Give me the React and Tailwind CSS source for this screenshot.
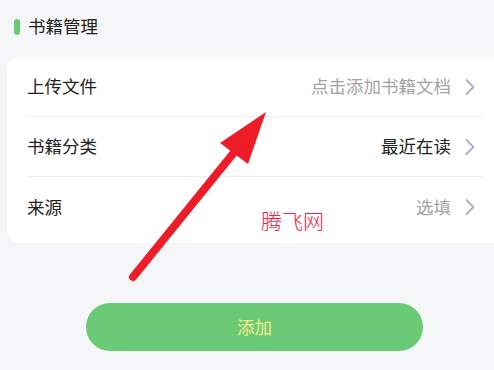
const font = { fontFamily: '"Noto Sans CJK SC", "Noto Sans", sans-serif' };

function Chevron() {
  return (
    <svg width="11" height="16" viewBox="0 0 11 16" className="mr-[6px]">
      <polyline points="1.5,1 8.5,8 1.5,15" fill="none" stroke="#aab0c8" strokeWidth="1.8" strokeLinecap="round" strokeLinejoin="round" />
    </svg>
  );
}

function Row({ label, value, muted, last }) {
  return (
    <div className={`flex h-[60px] items-center justify-between ${last ? '' : 'border-b border-[#eeeeee]'}`}>
      <span className="text-[17.5px] text-[#222222]">{label}</span>
      <span className="flex items-center gap-[14px]">
        <span className={`text-[17.5px] ${muted ? 'text-[#a3a3a3]' : 'text-[#222222]'}`}>{value}</span>
        <Chevron />
      </span>
    </div>
  );
}

export default function App() {
  return (
    <div className="relative h-[370px] w-[494px] overflow-hidden bg-[#f5f6f8]" style={font}>
      <div className="flex h-[57px] items-center gap-[8px] pb-[4px] pl-[14px]">
        <span className="h-[16px] w-[6px] rounded-full bg-[#6aca76]" />
        <span className="text-[17.5px] text-[#222222]">书籍管理</span>
      </div>

      <div className="ml-[7px] mr-[-10px] rounded-[12px] bg-white pb-[6px] pl-[20px] pr-[22px]">
        <Row label="上传文件" value="点击添加书籍文档" muted />
        <Row label="书籍分类" value="最近在读" />
        <Row label="来源" value="选填" muted last />
      </div>

      <div className="mt-[60px] pl-[86px]">
        <button className="flex h-[48px] w-[337px] items-center justify-center rounded-full bg-[#6aca76] text-[17.5px] text-[#f3ef8a]">
          添加
        </button>
      </div>

      <span className="absolute left-[261px] top-[205px] text-[21px] font-light text-[#f0243c]">腾飞网</span>

      <svg className="pointer-events-none absolute left-0 top-0" width="494" height="370" viewBox="0 0 494 370">
        <line x1="133" y1="277" x2="236" y2="150" stroke="#ee1c27" strokeWidth="8" strokeLinecap="round" />
        <polygon points="266,112 220,143 248,164" fill="#ee1c27" />
      </svg>
    </div>
  );
}
